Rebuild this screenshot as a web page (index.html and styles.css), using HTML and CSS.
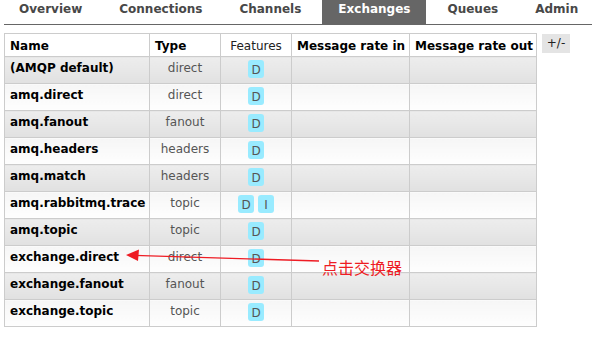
FILE: index.html
```html
<!DOCTYPE html>
<html>
<head>
<meta charset="utf-8">
<link rel="stylesheet" href="styles.css">
</head>
<body>
<div class="page">
  <ul class="tabs">
    <li class="tab">Overview</li>
    <li class="tab">Connections</li>
    <li class="tab">Channels</li>
    <li class="tab active">Exchanges</li>
    <li class="tab">Queues</li>
    <li class="tab">Admin</li>
  </ul>
  <div class="content">
    <table class="list">
      <colgroup>
        <col class="c-name"><col class="c-type"><col class="c-feat"><col class="c-in"><col class="c-out">
      </colgroup>
      <thead>
        <tr><th class="l">Name</th><th class="l">Type</th><th class="feat-h">Features</th><th>Message rate in</th><th>Message rate out</th></tr>
      </thead>
      <tbody>
        <tr class="odd"><td class="name">(AMQP default)</td><td class="type">direct</td><td class="feat"><span class="badge">D</span></td><td></td><td></td></tr>
        <tr class="even"><td class="name">amq.direct</td><td class="type">direct</td><td class="feat"><span class="badge">D</span></td><td></td><td></td></tr>
        <tr class="odd"><td class="name">amq.fanout</td><td class="type">fanout</td><td class="feat"><span class="badge">D</span></td><td></td><td></td></tr>
        <tr class="even"><td class="name">amq.headers</td><td class="type">headers</td><td class="feat"><span class="badge">D</span></td><td></td><td></td></tr>
        <tr class="odd"><td class="name">amq.match</td><td class="type">headers</td><td class="feat"><span class="badge">D</span></td><td></td><td></td></tr>
        <tr class="even"><td class="name">amq.rabbitmq.trace</td><td class="type">topic</td><td class="feat"><span class="badge">D</span><span class="badge">I</span></td><td></td><td></td></tr>
        <tr class="odd"><td class="name">amq.topic</td><td class="type">topic</td><td class="feat"><span class="badge">D</span></td><td></td><td></td></tr>
        <tr class="even"><td class="name">exchange.direct</td><td class="type">direct</td><td class="feat"><span class="badge">D</span></td><td></td><td></td></tr>
        <tr class="odd"><td class="name">exchange.fanout</td><td class="type">fanout</td><td class="feat"><span class="badge">D</span></td><td></td><td></td></tr>
        <tr class="even"><td class="name">exchange.topic</td><td class="type">topic</td><td class="feat"><span class="badge">D</span></td><td></td><td></td></tr>
      </tbody>
    </table>
    <span class="toggle">+/-</span>
  </div>
  <svg class="annot-arrow" width="592" height="338" viewBox="0 0 592 338">
    <line x1="319" y1="261" x2="134" y2="255.3" stroke="#ee1c24" stroke-width="1.3"/>
    <polygon points="126,255 139,249.5 138,261" fill="#ee1c24"/>
  </svg>
  <div class="annot-text">点击交换器</div>
</div>
</body>
</html>
```

FILE: styles.css
```css
html, body {
  margin: 0;
  padding: 0;
  background: #fff;
}
.page {
  position: relative;
  width: 592px;
  height: 338px;
  overflow: hidden;
  font-family: "DejaVu Sans", Verdana, sans-serif;
}
.tabs {
  list-style: none;
  margin: 0 0 0 4px;
  padding: 0;
  display: flex;
  height: 24px;
  border-bottom: 1px solid #666;
}
.tab {
  font-size: 12px;
  font-weight: bold;
  color: #484848;
  line-height: 18px;
  height: 24px;
  padding: 0 16px;
  margin-right: 5px;
  box-sizing: border-box;
}
.tab:first-child { padding-left: 15px; }
.tab.active {
  background: #666;
  color: #fff;
}
.content {
  display: flex;
  align-items: flex-start;
  gap: 5px;
  padding: 8px 0 0 4px;
}
.list {
  border-collapse: collapse;
  table-layout: fixed;
  width: 533px;
  font-size: 12px;
}
.c-name { width: 145px; }
.c-type { width: 71px; }
.c-feat { width: 71px; }
.c-in { width: 118px; }
.c-out { width: 127px; }
.list th, .list td {
  border: 1px solid #ccc;
  overflow: hidden;
  white-space: nowrap;
}
.list thead tr { height: 23px; }
.list tbody tr { height: 27px; }
.list th {
  font-weight: bold;
  color: #000;
  background: #fff;
  text-align: center;
  line-height: 16px;
  padding: 2px 5px 1px;
  vertical-align: middle;
}
.list th.l { text-align: left; }
.list th.feat-h { font-weight: normal; color: #222; }
.list td {
  vertical-align: top;
  padding: 4px 5px 0;
  line-height: 15px;
}
.odd td { background: linear-gradient(#ededed, #e1e1e1); }
.even td { background: linear-gradient(#f6f6f6, #fefefe); }
.name {
  font-weight: bold;
  color: #000;
}
.type {
  text-align: center;
  color: #555;
}
.list td.feat {
  text-align: center;
  padding-top: 3px;
}
.badge {
  display: inline-block;
  min-width: 16px;
  height: 18px;
  line-height: 20px;
  padding: 0 2px;
  box-sizing: border-box;
  border-radius: 3px;
  background: #99ebff;
  color: #555;
  font-size: 12px;
  margin: 0 2px;
  vertical-align: top;
}
.toggle {
  display: inline-block;
  margin-top: 1px;
  width: 28px;
  height: 19px;
  background: #e4e4e4;
  color: #222;
  font-size: 12px;
  line-height: 19px;
  text-align: center;
}
.annot-arrow {
  position: absolute;
  left: 0;
  top: 0;
  pointer-events: none;
}
.annot-text {
  position: absolute;
  left: 322px;
  top: 257px;
  font-family: "Noto Sans CJK SC", sans-serif;
  font-size: 16px;
  line-height: 20px;
  color: #ee1c24;
}
```
